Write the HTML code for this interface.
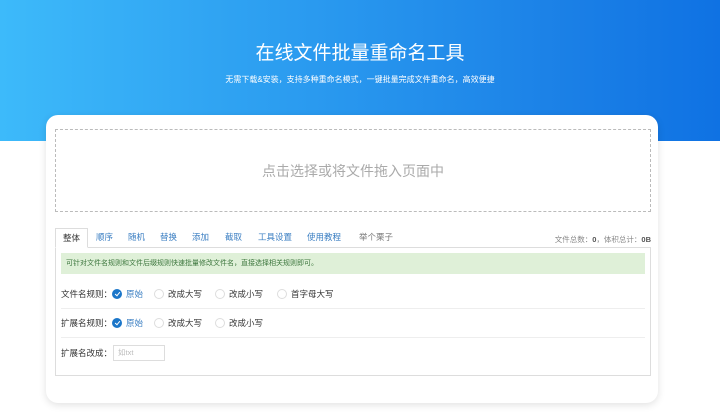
<!DOCTYPE html>
<html><head><meta charset="utf-8"><style>
*{box-sizing:border-box;margin:0;padding:0}
body{width:720px;height:414px;overflow:hidden;background:#fff;font-family:"Liberation Sans","Noto Sans CJK SC",sans-serif;position:relative}
.hd{position:absolute;left:0;top:0;width:720px;height:141px;background:linear-gradient(90deg,#3dbafa,#1a7fe6 80%,#0f72e3)}
.t1{position:absolute;top:38px;width:100%;text-align:center;color:#fff;font-size:19px}
.t2{position:absolute;top:74px;width:100%;text-align:center;color:#fff;font-size:8px}
.card{position:absolute;left:46px;top:115px;width:612px;height:288px;background:#fff;border-radius:12px;box-shadow:0 2px 8px rgba(0,0,0,.12)}
.drop{position:absolute;left:55px;top:129px;width:596px;height:83px;border:1px dashed #bbb;color:#aaa;font-size:14px;text-align:center;line-height:83px}
.tabs{position:absolute;left:55px;top:228px;height:19px;font-size:8.5px;width:400px}
.tab{position:absolute;top:0;height:19px;line-height:19px;color:#3a7ec2;white-space:nowrap}
.tab.a{border:1px solid #ddd;border-bottom:1px solid #fff;color:#333;background:#fff;padding:0 7px;height:20px;z-index:2}
.stat{position:absolute;right:69px;top:234px;font-size:7.5px;color:#888;white-space:nowrap}
.stat b{color:#555}
.panel{position:absolute;left:55px;top:247px;width:596px;height:129px;border:1px solid #ddd}
.green{position:absolute;left:61px;top:253px;width:584px;height:21px;background:#dff0d8;color:#3c763d;font-size:7px;line-height:21px;padding-left:5px;white-space:nowrap}
.row{position:absolute;left:61px;font-size:8.5px;color:#333;height:14px;line-height:14px;width:500px}
.sep{position:absolute;left:61px;width:584px;height:1px;background:#eee}
.r{position:absolute;top:0;white-space:nowrap}
.c{display:inline-block;width:10px;height:10px;border-radius:50%;border:1px solid #ddd;vertical-align:-2px;margin-right:4px}
.c.on{background:#1b76c9;border-color:#1b76c9;position:relative}
.c.on:after{content:"";position:absolute;left:3px;top:1px;width:2px;height:4px;border:solid #fff;border-width:0 1.2px 1.2px 0;transform:rotate(40deg)}
.on+span{color:#3a7ec2}
.inp{position:absolute;left:113px;top:345px;width:52px;height:16px;border:1px solid #ddd;font-size:7.5px;color:#bbb;line-height:14px;padding-left:4px}
</style></head><body>
<div class="hd"></div>
<div class="t1">在线文件批量重命名工具</div>
<div class="t2">无需下载&amp;安装，支持多种重命名模式，一键批量完成文件重命名，高效便捷</div>
<div class="card"></div>
<div class="drop">点击选择或将文件拖入页面中</div>
<div class="panel"></div>
<div class="tabs">
<div class="tab a" style="left:0">整体</div>
<div class="tab" style="left:41px">顺序</div>
<div class="tab" style="left:73px">随机</div>
<div class="tab" style="left:105px">替换</div>
<div class="tab" style="left:137px">添加</div>
<div class="tab" style="left:170px">截取</div>
<div class="tab" style="left:203px">工具设置</div>
<div class="tab" style="left:252px">使用教程</div>
<div class="tab" style="left:304px;color:#777">举个栗子</div>
</div>
<div class="stat">文件总数：<b>0</b>，体积总计：<b>0B</b></div>
<div class="green">可针对文件名规则和文件后缀规则快速批量修改文件名，直接选择相关规则即可。</div>
<div class="row" style="top:287px"><span class="r" style="left:0">文件名规则：</span>
<span class="r" style="left:51px"><i class="c on"></i><span>原始</span></span>
<span class="r" style="left:93px"><i class="c"></i>改成大写</span>
<span class="r" style="left:154px"><i class="c"></i>改成小写</span>
<span class="r" style="left:216px"><i class="c"></i>首字母大写</span></div>
<div class="sep" style="top:308px"></div>
<div class="row" style="top:316px"><span class="r" style="left:0">扩展名规则：</span>
<span class="r" style="left:51px"><i class="c on"></i><span>原始</span></span>
<span class="r" style="left:93px"><i class="c"></i>改成大写</span>
<span class="r" style="left:154px"><i class="c"></i>改成小写</span></div>
<div class="sep" style="top:337px"></div>
<div class="row" style="top:346px"><span class="r" style="left:0">扩展名改成：</span></div>
<div class="inp">如txt</div>
</body></html>
